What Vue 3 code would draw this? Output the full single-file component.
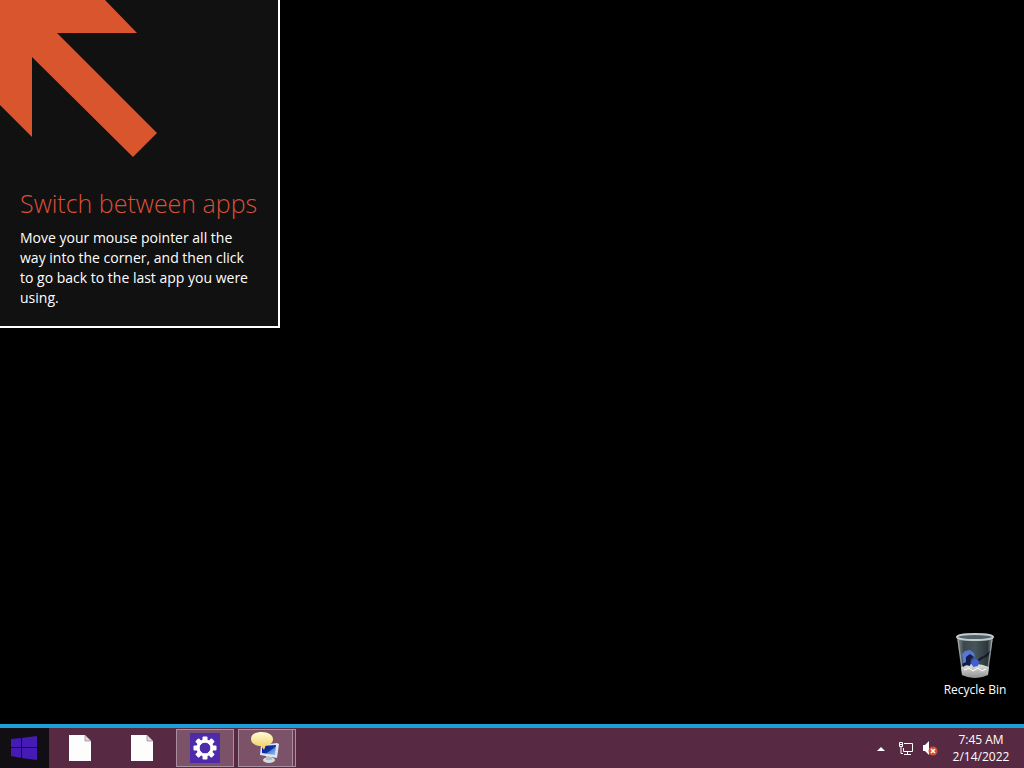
<script setup>
import { ref } from 'vue'

const time = ref('7:45 AM')
const date = ref('2/14/2022')
const documents = ['Document 1', 'Document 2']

const teeth = [0, 45, 90, 135, 180, 225, 270, 315]
</script>

<template>
  <div class="screen">
    <main class="desktop">
      <aside class="hint">
        <svg class="arrow" width="160" height="160" viewBox="0 0 160 160" aria-hidden="true">
          <path d="M0 0H105L137 33H57L157 133L133 157L32 57V137L0 105Z" fill="#d9552e" />
        </svg>
        <h1>Switch between apps</h1>
        <p>Move your mouse pointer all the way into the corner, and then click to go back to the last app you were using.</p>
      </aside>

      <button class="bin" type="button">
        <svg width="48" height="48" viewBox="0 0 48 48" aria-hidden="true">
          <defs>
            <linearGradient id="glass" x1="0" x2="1" y1="0" y2="0">
              <stop offset="0" stop-color="#8e989c" />
              <stop offset=".18" stop-color="#3c484e" />
              <stop offset=".5" stop-color="#46545b" />
              <stop offset=".85" stop-color="#2c363b" />
              <stop offset="1" stop-color="#919b9f" />
            </linearGradient>
            <linearGradient id="base" x1="0" x2="0" y1="0" y2="1">
              <stop offset="0" stop-color="#e4e5e2" />
              <stop offset="1" stop-color="#8f9290" />
            </linearGradient>
          </defs>
          <path d="M6 5L11 43Q24 49 37 43L42 5Z" fill="url(#glass)" />
          <path d="M10 35Q24 29 38 35L37 43Q24 49 11 43Z" fill="url(#base)" />
          <path d="M13 38l5-2 4 3 5-3 4 3 4-2" fill="none" stroke="#fff" />
          <path d="M24 30l6-5 3-1 7-6-3 6-6 3-6 5z" fill="#111b2a" />
          <path d="M11 22l3-3 5-1 4 3 1 4-5 2-3 5-4-1z" fill="#5877cf" />
          <path d="M15 25l4-3 4 3-3 2-1 7-4-1-3 2-1-3 4-2z" fill="#101c4a" />
          <path d="M20 30l4-4 4 3-1 5-5 1z" fill="#3f5ed8" />
          <ellipse cx="24" cy="5" rx="18" ry="3" fill="#526068" stroke="#c3caca" stroke-width="2" />
          <path d="M7 8L12 42M41 8L36 42" stroke="#bcc5c8" stroke-opacity=".6" />
        </svg>
        <span>Recycle Bin</span>
      </button>
    </main>

    <footer class="taskbar">
      <button class="start" type="button" aria-label="Start">
        <svg width="28" height="26" viewBox="0 0 28 26" aria-hidden="true">
          <path d="M0 4L10 3V12H0ZM11 3L26 1V12H11ZM0 13H10V23L0 21ZM11 13H26V25L11 23Z" fill="#451ab5" />
        </svg>
      </button>

      <nav class="apps">
        <button v-for="name in documents" :key="name" class="app" type="button" :aria-label="name">
          <svg width="24" height="28" viewBox="0 0 24 28" aria-hidden="true">
            <path d="M0 1H16L22 7V27H0Z" fill="#fdfdfd" />
            <path d="M16 1V7H22Z" fill="#ded6db" stroke="#8a6c7d" stroke-width=".6" />
          </svg>
        </button>
        <button class="app open" type="button" aria-label="PC settings">
          <svg width="30" height="30" viewBox="0 0 30 30" aria-hidden="true">
            <rect width="30" height="30" fill="#4e2bab" />
            <g fill="#fff">
              <rect v-for="angle in teeth" :key="angle" x="12.5" y="3.5" width="5" height="6" rx="1" :transform="`rotate(${angle} 15 15)`" />
            </g>
            <circle cx="15" cy="15" r="7" fill="none" stroke="#fff" stroke-width="3" />
          </svg>
        </button>
        <button class="app open stacked" type="button" aria-label="Computer messages">
          <svg width="32" height="32" viewBox="0 0 32 32" aria-hidden="true">
            <defs>
              <linearGradient id="bubble" x1="0" x2="0" y1="0" y2="1">
                <stop offset="0" stop-color="#fffbd5" />
                <stop offset="1" stop-color="#edcb54" />
              </linearGradient>
              <linearGradient id="monitor" x1="0" x2="1" y1="0" y2="1">
                <stop offset="0" stop-color="#07178b" />
                <stop offset=".55" stop-color="#1233a8" />
                <stop offset=".6" stop-color="#5286d8" />
                <stop offset="1" stop-color="#9cc4f0" />
              </linearGradient>
            </defs>
            <ellipse cx="19" cy="28" rx="6" ry="3" fill="#d5dbdc" />
            <path d="M16 24h6v4h-6z" fill="#b1bdc5" />
            <path d="M11 13L27 11L29 12L27 26L10 23Z" fill="#dde5ec" />
            <path d="M12 14L26 13L25 23L12 21Z" fill="url(#monitor)" />
            <path d="M1 7C1 2 6 0 12 0S23 3 23 7S20 13 16 13L14 18L11 14C5 14 1 11 1 7Z" fill="url(#bubble)" />
          </svg>
        </button>
      </nav>

      <div class="tray">
        <button class="status overflow" type="button" aria-label="Show hidden icons">
          <svg width="8" height="16" viewBox="0 0 8 16" aria-hidden="true">
            <path d="M0 11L4 7L8 11Z" fill="#fff" />
          </svg>
        </button>
        <button class="status" type="button" aria-label="Network">
          <svg width="16" height="16" viewBox="0 0 16 16" aria-hidden="true" fill="none" stroke="#fff">
            <path d="M6 3.500H14.500V11.500H5.500V8M9.500 12V14.500M6 14.500H13" />
            <path d="M1.500 2.500H4.500V6.500H1.500ZM3 7V13.500H5M2 4.500H4" />
          </svg>
        </button>
        <button class="status" type="button" aria-label="Volume muted">
          <svg width="16" height="16" viewBox="0 0 16 16" aria-hidden="true">
            <path d="M1 5H3L7 1V15L3 11H1Z" fill="#fff" />
            <circle cx="11" cy="11" r="4.500" fill="#d3502f" />
            <path d="M9 9L13 13M13 9L9 13" stroke="#fff" stroke-width="1.500" />
          </svg>
        </button>
        <button class="clock" type="button">
          <time>{{ time }}</time>
          <time>{{ date }}</time>
        </button>
      </div>
    </footer>
  </div>
</template>

<style>
body {
  margin: 0;
  background: #000;
}
</style>

<style scoped>
.screen {
  display: flex;
  flex-direction: column;
  min-height: 100vh;
  background: #000;
  color: #fff;
  font-family: "Open Sans", "Noto Sans", sans-serif;
}

button {
  margin: 0;
  padding: 0;
  border: 0;
  background: none;
  color: inherit;
  font: inherit;
}

svg {
  display: block;
}

.desktop {
  flex: 1;
  display: flex;
  justify-content: space-between;
  align-items: flex-start;
}

.hint {
  box-sizing: border-box;
  width: 280px;
  padding-bottom: 18px;
  border: solid #fff;
  border-width: 0 2px 2px 0;
  background: #111;
}

.hint h1 {
  margin: 27px 20px 9px;
  color: #d9503a;
  font-size: 25px;
  font-weight: 300;
  line-height: 32px;
  white-space: nowrap;
}

.hint p {
  margin: 0 20px;
  font-size: 14px;
  line-height: 20px;
}

.bin {
  align-self: flex-end;
  display: flex;
  flex-direction: column;
  align-items: center;
  gap: 2px;
  width: 76px;
  margin: 0 11px 26px 0;
  font-size: 12px;
  line-height: 16px;
}

.taskbar {
  display: flex;
  height: 40px;
  border-top: 4px solid #1d9fd9;
  background: #572942;
}

.start {
  display: flex;
  justify-content: center;
  align-items: center;
  width: 49px;
  background: #110f14;
}

.apps {
  display: flex;
  gap: 4px;
  padding: 1px 0 1px 3px;
}

.app {
  display: flex;
  box-sizing: border-box;
  justify-content: center;
  align-items: center;
  width: 58px;
  border: 1px solid transparent;
}

.open {
  border-color: #a98e9f;
  background: #7b5268;
}

.stacked {
  padding-right: 4px;
  border-right: 0;
  box-shadow: inset -1px 0 #a98e9f, inset -3px 0 #67354f, inset -4px 0 #a98e9f;
}

.tray {
  display: flex;
  gap: 8px;
  margin-left: auto;
  padding-right: 12px;
}

.status {
  display: flex;
  align-items: center;
}

.overflow {
  margin-right: 5px;
}

.clock {
  display: flex;
  flex-direction: column;
  justify-content: center;
  align-items: center;
  width: 62px;
  margin-left: 4px;
  font-size: 12px;
  line-height: 17px;
}
</style>
